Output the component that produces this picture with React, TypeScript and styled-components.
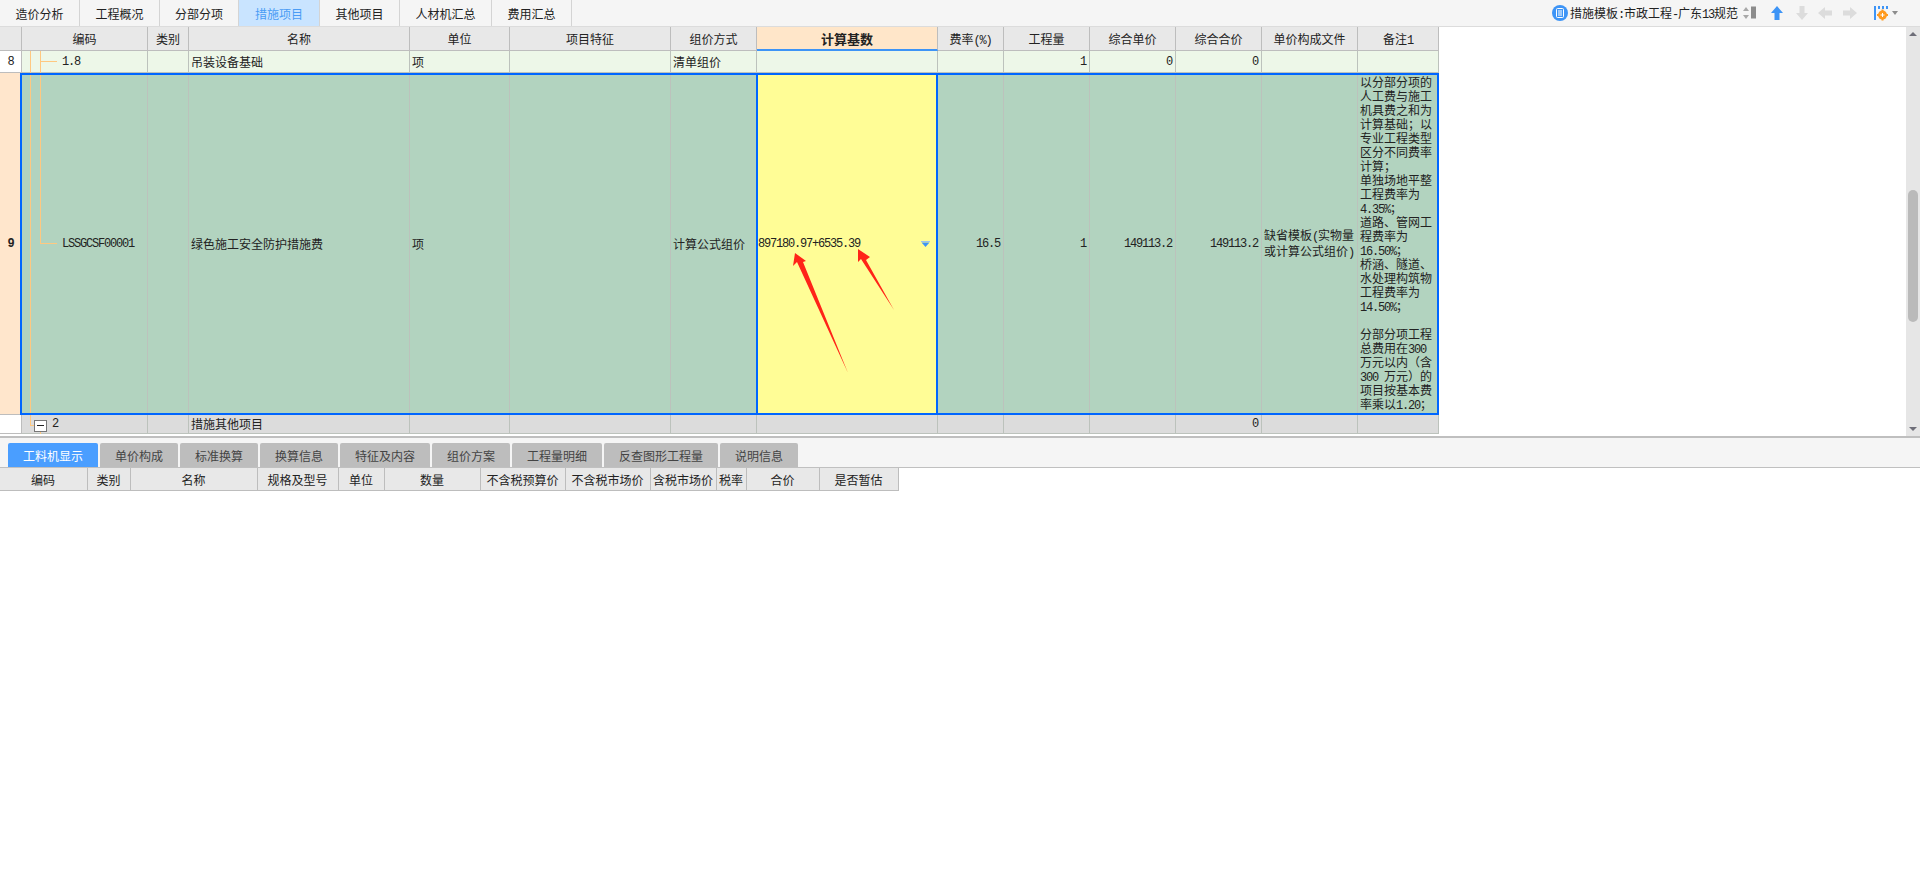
import { Fragment } from 'react';
import styled, { createGlobalStyle } from 'styled-components';

const MAIN_COLUMNS = '22px 126px 41px 221px 100px 161px 86px 181px 66px 86px 86px 86px 96px 81px';
const DETAIL_COLUMNS = '88px 43px 127px 81px 46px 96px 85px 85px 66px 30px 73px 79px';

const GlobalStyle = createGlobalStyle`
  html, body {
    margin: 0;
    padding: 0;
    background: #fff;
  }
  body {
    font-family: 'Noto Sans CJK SC', sans-serif;
    font-size: 12px;
    color: #222;
  }
`;

const Page = styled.div`
  display: flex;
  flex-direction: column;
  width: 1920px;
  height: 872px;
  overflow: hidden;
`;

const TopBar = styled.div`
  display: flex;
  align-items: center;
  flex: 0 0 27px;
  box-sizing: border-box;
  background: #f5f5f5;
  border-bottom: 1px solid #dcdcdc;
`;

const TopTab = styled.div<{ $active?: boolean; $width: number }>`
  display: flex;
  align-items: center;
  justify-content: center;
  box-sizing: border-box;
  width: ${(p) => p.$width}px;
  height: 26px;
  border-right: 1px solid #d4d4d4;
  background: ${(p) => (p.$active ? '#c9e4ff' : 'transparent')};
  color: ${(p) => (p.$active ? '#4a9cf5' : '#222')};
`;

const Tools = styled.div`
  display: flex;
  align-items: center;
  margin-left: auto;
  padding-right: 22px;
`;

const ToolLabel = styled.span`
  margin: 0 5px 0 2px;
  white-space: nowrap;
`;

const ToolIcon = styled.svg<{ $gap?: number }>`
  display: block;
  flex: none;
  margin-left: ${(p) => p.$gap ?? 0}px;
`;

const Workspace = styled.div`
  display: flex;
  flex: 0 0 409px;
  overflow: hidden;
`;

const TableArea = styled.div`
  flex: 1;
  min-width: 0;
`;

const Row = styled.div<{ $height: number; $bg: string }>`
  position: relative;
  display: grid;
  grid-template-columns: ${MAIN_COLUMNS};
  width: 1439px;
  height: ${(p) => p.$height}px;
  background: ${(p) => p.$bg};
`;

const HeadCell = styled.div<{ $active?: boolean }>`
  display: flex;
  align-items: center;
  justify-content: center;
  box-sizing: border-box;
  border-right: 1px solid #bdbdbd;
  border-bottom: ${(p) => (p.$active ? '2px solid #3d94f6' : '1px solid #bdbdbd')};
  background: ${(p) => (p.$active ? '#ffe6c9' : '#e8e8e8')};
  font-size: ${(p) => (p.$active ? '13px' : '12px')};
  font-weight: ${(p) => (p.$active ? 700 : 400)};
`;

const Cell = styled.div<{ $align?: 'left' | 'right' }>`
  position: relative;
  display: flex;
  align-items: center;
  justify-content: ${(p) => (p.$align === 'right' ? 'flex-end' : 'flex-start')};
  box-sizing: border-box;
  padding: ${(p) => (p.$align === 'right' ? '0 3px 0 0' : '0 0 0 2px')};
  border-right: 1px solid #bcc2bc;
  border-bottom: 1px solid #bcc2bc;
  line-height: 14px;
`;

const RowNumber = styled.div<{ $current?: boolean }>`
  display: flex;
  align-items: center;
  justify-content: center;
  box-sizing: border-box;
  border-right: 1px solid #bdbdbd;
  border-bottom: 1px solid #bdbdbd;
  background: ${(p) => (p.$current ? '#ffe6cc' : '#fff')};
  font-weight: ${(p) => (p.$current ? 700 : 400)};
`;

const CodeCell = styled(Cell)<{ $indent: number }>`
  padding-left: ${(p) => p.$indent}px;
`;

const GuideV = styled.i<{ $left: number; $top?: number; $height?: number }>`
  position: absolute;
  left: ${(p) => p.$left}px;
  top: ${(p) => p.$top ?? 0}px;
  width: 1px;
  height: ${(p) => (p.$height ? `${p.$height}px` : 'calc(100% + 1px)')};
  background: #ffc880;
`;

const GuideH = styled.i<{ $left: number; $top: number; $width: number }>`
  position: absolute;
  left: ${(p) => p.$left}px;
  top: ${(p) => p.$top}px;
  width: ${(p) => p.$width}px;
  height: 1px;
  background: #ffc880;
`;

const Collapse = styled.span`
  position: absolute;
  left: 12px;
  top: 5px;
  box-sizing: border-box;
  width: 13px;
  height: 12px;
  border: 1px solid #777;
  background: #fff;

  &::after {
    content: '';
    position: absolute;
    left: 2px;
    right: 2px;
    top: 4px;
    height: 1px;
    background: #222;
  }
`;

const FormulaCell = styled(Cell)`
  margin-left: -1px;
  border-left: 2px solid #0066ff;
  border-right: 2px solid #0066ff;
  background: #fffd96;
  padding-left: 0;
`;

const DropCaret = styled.svg`
  position: absolute;
  right: 6px;
  top: 168px;
`;

const Arrows = styled.svg`
  position: absolute;
  left: 0;
  top: 0;
  pointer-events: none;
`;

const SelectionFrame = styled.div`
  position: absolute;
  left: 20px;
  right: 0;
  top: 0;
  bottom: 0;
  border: 2px solid #0066ff;
  pointer-events: none;
`;

const NoteCell = styled(Cell)`
  display: block;
  padding: 2px 0 0 2px;
  white-space: nowrap;
`;

const NoteLine = styled.div`
  height: 14px;
  line-height: 14px;
`;

const Latin = styled.span`
  font-family: 'Liberation Mono', monospace;
  font-size: 12px;
  letter-spacing: -1.2px;
  white-space: pre;
`;

const Scrollbar = styled.div`
  display: flex;
  flex-direction: column;
  align-items: center;
  flex: 0 0 14px;
  box-sizing: border-box;
  padding: 5px 0;
  background: #e6e6e6;
`;

const ScrollThumb = styled.div`
  flex: none;
  width: 10px;
  height: 132px;
  margin-top: 154px;
  margin-bottom: auto;
  border-radius: 5px;
  background: #bababa;
`;

const DetailTabs = styled.div`
  display: flex;
  align-items: flex-end;
  gap: 2px;
  flex: 0 0 32px;
  box-sizing: border-box;
  padding-left: 8px;
  border-top: 2px solid #bfbfbf;
  border-bottom: 1px solid #c0c0c0;
  background: #f5f5f5;
`;

const DetailTab = styled.div<{ $active?: boolean; $width: number }>`
  display: flex;
  align-items: center;
  justify-content: center;
  width: ${(p) => p.$width}px;
  height: 24px;
  border-radius: 2px 2px 0 0;
  background: ${(p) => (p.$active ? '#4a9eff' : '#bdbdbd')};
  color: ${(p) => (p.$active ? '#fff' : '#444')};
`;

const DetailHead = styled.div`
  display: grid;
  grid-template-columns: ${DETAIL_COLUMNS};
  width: 899px;
  height: 23px;
`;

const DetailHeadCell = styled.div`
  display: flex;
  align-items: center;
  justify-content: center;
  box-sizing: border-box;
  padding-right: 1px;
  border-right: 1px solid #bdbdbd;
  border-bottom: 1px solid #bdbdbd;
  background: #e8e8e8;
  white-space: nowrap;
`;

const topTabs = [
  { label: '造价分析', width: 80 },
  { label: '工程概况', width: 80 },
  { label: '分部分项', width: 79 },
  { label: '措施项目', width: 81, active: true },
  { label: '其他项目', width: 80 },
  { label: '人材机汇总', width: 92 },
  { label: '费用汇总', width: 80 },
];

const mainHeaders = ['', '编码', '类别', '名称', '单位', '项目特征', '组价方式', '计算基数', '费率(%)', '工程量', '综合单价', '综合合价', '单价构成文件', '备注1'];

const detailTabs = [
  { label: '工料机显示', width: 90, active: true },
  { label: '单价构成', width: 78 },
  { label: '标准换算', width: 78 },
  { label: '换算信息', width: 78 },
  { label: '特征及内容', width: 90 },
  { label: '组价方案', width: 78 },
  { label: '工程量明细', width: 90 },
  { label: '反查图形工程量', width: 114 },
  { label: '说明信息', width: 78 },
];

const detailHeaders = ['编码', '类别', '名称', '规格及型号', '单位', '数量', '不含税预算价', '不含税市场价', '含税市场价', '税率', '合价', '是否暂估'];

const noteLines = [
  '以分部分项的', '人工费与施工', '机具费之和为', '计算基础；以', '专业工程类型', '区分不同费率',
  '计算；', '单独场地平整', '工程费率为', '4.35%；', '道路、管网工', '程费率为', '16.50%；',
  '桥涵、隧道、', '水处理构筑物', '工程费率为', '14.50%；', '', '分部分项工程', '总费用在300',
  '万元以内（含', '300 万元）的', '项目按基本费', '率乘以1.20；',
];

// SimSun keeps Latin at half the CJK advance, so ASCII runs get their own span
const Mixed = ({ text }: { text: string }) => (
  <span>
    {text.split(/([\x20-\x7e]+)/).map((part, i) =>
      i % 2 ? <Latin key={i}>{part}</Latin> : <Fragment key={i}>{part}</Fragment>
    )}
  </span>
);

const BlockArrow = ({ dir, color, gap }: { dir: number; color: string; gap: number }) => (
  <ToolIcon $gap={gap} width='16' height='16' viewBox='0 0 16 16'>
    <polygon
      points='8,1 14,8 10.5,8 10.5,15 5.5,15 5.5,8 2,8'
      fill={color}
      transform={`rotate(${dir} 8 8)`}
    />
  </ToolIcon>
);

const App = () => {
  return (
    <Page>
      <GlobalStyle />
      <TopBar>
        {topTabs.map((tab) => (
          <TopTab key={tab.label} $width={tab.width} $active={tab.active}>
            {tab.label}
          </TopTab>
        ))}
        <Tools>
          <ToolIcon width='16' height='16' viewBox='0 0 16 16'>
            <circle cx='8' cy='8' r='8' fill='#3d94f6' />
            <rect x='4.5' y='3.5' width='7' height='9' rx='1' fill='none' stroke='#fff' />
            <path d='M6 6h4M6 8h4M6 10h4' stroke='#fff' />
          </ToolIcon>
          <ToolLabel>
            <Mixed text='措施模板:市政工程-广东13规范' />
          </ToolLabel>
          <ToolIcon width='13' height='14' viewBox='0 0 13 14'>
            <path d='M3 1l3 4H0zM3 13l3-4H0z' fill='#a8a8a8' />
            <rect x='8' y='0.5' width='5' height='12' fill='#8c8c8c' />
          </ToolIcon>
          <BlockArrow dir={0} color='#3d94f6' gap={13} />
          <BlockArrow dir={180} color='#dcdcdc' gap={9} />
          <BlockArrow dir={270} color='#dcdcdc' gap={7} />
          <BlockArrow dir={90} color='#dcdcdc' gap={9} />
          <ToolIcon $gap={16} width='14' height='16' viewBox='0 0 14 16'>
            <path d='M1 1v14' stroke='#3d94f6' strokeWidth='2' />
            <path d='M5 1v3M9 1v3M13 1v3' stroke='#3d94f6' strokeWidth='2' />
            <circle cx='8.5' cy='10' r='4.5' fill='#ff9a1f' />
            <path d='M8.5 4.5v11M3 10h11' stroke='#ff9a1f' strokeWidth='2' />
            <path d='M8.5 8v4M6.5 10h4' stroke='#fff' />
          </ToolIcon>
          <ToolIcon $gap={4} width='6' height='4' viewBox='0 0 6 4'>
            <path d='M0 0h6L3 4z' fill='#8c8c8c' />
          </ToolIcon>
        </Tools>
      </TopBar>

      <Workspace>
        <TableArea>
          <Row $height={24} $bg='#e8e8e8'>
            {mainHeaders.map((title, i) => (
              <HeadCell key={i} $active={title === '计算基数'}>
                <Mixed text={title} />
              </HeadCell>
            ))}
          </Row>

          <Row $height={22} $bg='#edf7e8'>
            <RowNumber><Latin>8</Latin></RowNumber>
            <CodeCell $indent={40}>
              <GuideV $left={8} />
              <GuideV $left={18} />
              <GuideH $left={18} $top={10} $width={17} />
              <Latin>1.8</Latin>
            </CodeCell>
            <Cell />
            <Cell>吊装设备基础</Cell>
            <Cell>项</Cell>
            <Cell />
            <Cell>清单组价</Cell>
            <Cell />
            <Cell />
            <Cell $align='right'><Latin>1</Latin></Cell>
            <Cell $align='right'><Latin>0</Latin></Cell>
            <Cell $align='right'><Latin>0</Latin></Cell>
            <Cell />
            <Cell />
          </Row>

          <Row $height={342} $bg='#b2d3bf'>
            <RowNumber $current><Latin>9</Latin></RowNumber>
            <CodeCell $indent={40}>
              <GuideV $left={8} />
              <GuideV $left={18} $height={170} />
              <GuideH $left={18} $top={170} $width={17} />
              <Latin>LSSGCSF00001</Latin>
            </CodeCell>
            <Cell />
            <Cell>绿色施工安全防护措施费</Cell>
            <Cell>项</Cell>
            <Cell />
            <Cell>计算公式组价</Cell>
            <FormulaCell>
              <Latin>897180.97+6535.39</Latin>
              <DropCaret width='9' height='6' viewBox='0 0 9 6'>
                <path d='M0 0h9v1H0z' fill='#9cc4ee' />
                <path d='M0.5 1.5h8L4.5 6z' fill='#3d94f6' />
              </DropCaret>
              <Arrows width='178' height='342' viewBox='0 0 178 342'>
                <polygon points='37,180 48,188 45,189 90,300 39,189 35,193' fill='#ff2418' />
                <polygon points='100,176 112,184 108,187 136,237 103,186 100,189' fill='#ff2418' />
              </Arrows>
            </FormulaCell>
            <Cell $align='right'><Latin>16.5</Latin></Cell>
            <Cell $align='right'><Latin>1</Latin></Cell>
            <Cell $align='right'><Latin>149113.2</Latin></Cell>
            <Cell $align='right'><Latin>149113.2</Latin></Cell>
            <Cell>
              <div>
                <Mixed text='缺省模板(实物量' />
                <br />
                <Mixed text='或计算公式组价)' />
              </div>
            </Cell>
            <NoteCell>
              {noteLines.map((line, i) => (
                <NoteLine key={i}>
                  <Mixed text={line} />
                </NoteLine>
              ))}
            </NoteCell>
            <SelectionFrame />
          </Row>

          <Row $height={19} $bg='#dcdcdc'>
            <RowNumber />
            <CodeCell $indent={30}>
              <GuideV $left={8} $height={11} />
              <GuideH $left={8} $top={10} $width={4} />
              <GuideV $left={18} $top={17} $height={2} />
              <Collapse />
              <Latin>2</Latin>
            </CodeCell>
            <Cell />
            <Cell>措施其他项目</Cell>
            <Cell />
            <Cell />
            <Cell />
            <Cell />
            <Cell />
            <Cell />
            <Cell />
            <Cell $align='right'><Latin>0</Latin></Cell>
            <Cell />
            <Cell />
          </Row>
        </TableArea>

        <Scrollbar>
          <svg width='8' height='4' viewBox='0 0 8 4'>
            <path d='M4 0l4 4H0z' fill='#6e6e78' />
          </svg>
          <ScrollThumb />
          <svg width='8' height='4' viewBox='0 0 8 4'>
            <path d='M4 4l4-4H0z' fill='#6e6e78' />
          </svg>
        </Scrollbar>
      </Workspace>

      <DetailTabs>
        {detailTabs.map((tab) => (
          <DetailTab key={tab.label} $width={tab.width} $active={tab.active}>
            {tab.label}
          </DetailTab>
        ))}
      </DetailTabs>

      <DetailHead>
        {detailHeaders.map((title) => (
          <DetailHeadCell key={title}>{title}</DetailHeadCell>
        ))}
      </DetailHead>
    </Page>
  );
};

export default App;
